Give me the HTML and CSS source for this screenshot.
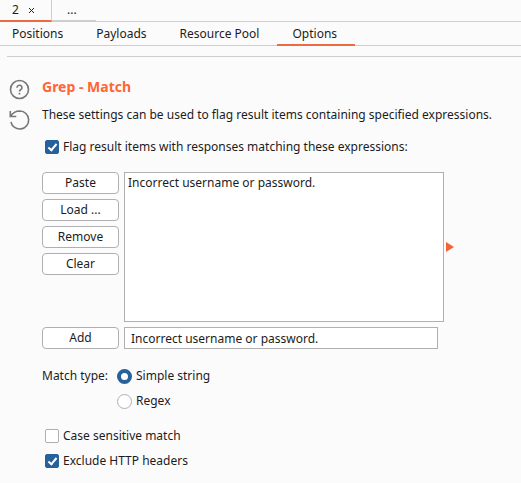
FILE: index.html
```html
<!DOCTYPE html>
<html lang="en">
<head>
<meta charset="utf-8">
<title>Intruder options</title>
<link rel="stylesheet" href="styles.css">
</head>
<body>
<nav class="attack-tabs" aria-label="Attacks">
  <div class="attack-tab attack-tab-active"><a href="#attack">2</a><button class="close" type="button" aria-label="Close tab"><svg width="7" height="7" viewBox="0 0 7 7"><path d="M1 1l5 5M6 1l-5 5"/></svg></button></div>
  <a class="attack-tab attack-tab-new" href="#new">...</a>
</nav>
<nav class="section-tabs" aria-label="Sections">
  <a href="#positions">Positions</a>
  <a href="#payloads">Payloads</a>
  <a href="#pool">Resource Pool</a>
  <a class="current" href="#options">Options</a>
</nav>
<main class="panel">
  <div class="tools">
    <button type="button" aria-label="Help"><svg width="22" height="22" viewBox="0 0 22 22"><circle cx="11.500" cy="10.500" r="9"/><path d="M9 8.700a2.500 2.300 0 1 1 3.900 1.800c-.9.6-1.400 1-1.400 1.900"/><path d="M11.500 13.800v1.700"/></svg></button>
    <button type="button" aria-label="Restore defaults"><svg width="22" height="22" viewBox="0 0 22 22"><path d="M2.300 2v5.500h6M2.600 7.300C4.500 4 7.700 2 11.900 2a9 9 0 1 1-9 11"/></svg></button>
  </div>
  <form class="content">
    <h1>Grep - Match</h1>
    <p>These settings can be used to flag result items containing specified expressions.</p>
    <label class="check"><input type="checkbox" checked>Flag result items with responses matching these expressions:</label>
    <div class="editor">
      <div class="buttons">
        <button type="button">Paste</button>
        <button type="button">Load ...</button>
        <button type="button">Remove</button>
        <button type="button">Clear</button>
      </div>
      <ul class="list" aria-label="Expressions"><li>Incorrect username or password.</li></ul>
      <svg class="arrow" width="8" height="10" viewBox="0 0 8 10"><path d="M0 0l8 5-8 5z"/></svg>
      <button type="button">Add</button>
      <input class="entry" type="text" aria-label="New expression" value="Incorrect username or password.">
    </div>
    <div class="match" role="radiogroup" aria-labelledby="match-type">
      <span id="match-type">Match type:</span>
      <div class="choices">
        <label><input type="radio" name="match" checked>Simple string</label>
        <label><input type="radio" name="match">Regex</label>
      </div>
    </div>
    <div class="checks">
      <label class="check"><input type="checkbox">Case sensitive match</label>
      <label class="check"><input type="checkbox" checked>Exclude HTTP headers</label>
    </div>
  </form>
</main>
</body>
</html>
```

FILE: styles.css
```css
*,
*::before {
  box-sizing: border-box;
}

body {
  margin: 0;
  background: #fbfbfc;
  color: #1c1c1c;
  font: 12px/20px "Noto Sans", sans-serif;
}

a {
  color: inherit;
  text-decoration: none;
}

button,
input {
  font: inherit;
  color: inherit;
}

.attack-tabs {
  display: flex;
  height: 22px;
  border-bottom: 1px solid #cecece;
}

.attack-tab {
  height: 22px;
}

.attack-tab-active {
  display: flex;
  align-items: center;
  gap: 9px;
  width: 52px;
  padding-left: 12px;
  border-right: 1px solid #cecece;
  border-bottom: 2px solid #ec6b43;
}

.close {
  display: flex;
  padding: 0;
  border: 0;
  background: none;
}

.close svg {
  fill: none;
  stroke: #222;
}

.attack-tab-new {
  width: 44px;
  padding-left: 15px;
  border-bottom: 2px solid #cecece;
}

.section-tabs {
  display: flex;
  height: 24px;
  border-bottom: 1px solid #cecece;
}

.section-tabs a {
  height: 24px;
  padding: 2px 18px 0 15px;
}

.section-tabs a:first-child {
  padding-left: 12px;
}

.section-tabs .current {
  border-bottom: 2px solid #ec6b43;
}

.panel {
  display: flex;
  gap: 11px;
  margin: 10px 0 0 7px;
  padding-top: 20px;
  border-top: 1px solid #cecece;
}

.tools {
  display: flex;
  flex-direction: column;
  gap: 8px;
  width: 24px;
  padding-top: 2px;
}

.tools button {
  display: flex;
  padding: 0 1px;
  border: 0;
  background: none;
}

.tools svg {
  fill: none;
  stroke: #777;
  stroke-width: 1.6;
}

.content {
  flex: 1;
}

h1 {
  margin: 0 0 8px;
  color: #ff6633;
  font-size: 14px;
  line-height: 20px;
}

p {
  margin: 0 0 12px;
}

label {
  display: flex;
  align-items: center;
  height: 20px;
}

.check {
  gap: 4px;
  padding-left: 3px;
}

.check input,
.choices input {
  display: grid;
  place-items: center;
  appearance: none;
  flex: none;
  margin: 0;
  border: 1px solid #b0b0b0;
  background: #fff;
}

.check input {
  width: 14px;
  height: 14px;
  border-radius: 2px;
}

.check input:checked {
  border-color: #26619c;
  background: #26619c;
}

.check input:checked::before {
  content: "";
  width: 5px;
  height: 9px;
  margin-bottom: 2px;
  border: solid #fff;
  border-width: 0 2px 2px 0;
  transform: rotate(40deg);
}

.editor {
  display: grid;
  grid-template-columns: 77px 1fr 8px;
  gap: 5px 0;
  align-items: center;
  margin: 15px 67px 17px 0;
}

.editor button {
  width: 77px;
  height: 22px;
  padding: 0;
  border: 1px solid #b0b0b2;
  border-radius: 4px;
  background: #fff;
}

.buttons {
  display: flex;
  flex-direction: column;
  align-self: start;
  gap: 5px;
}

.list {
  height: 150px;
  margin: 0 2px 0 5px;
  padding: 0 3px;
  border: 1px solid #b0b0b2;
  background: #fff;
  list-style: none;
}

.arrow {
  fill: #f2643a;
}

.entry {
  width: auto;
  min-width: 0;
  height: 22px;
  margin: 0 8px 0 5px;
  padding: 0 6px;
  border: 1px solid #b0b0b2;
  border-radius: 0;
  background: #fff;
}

.match {
  display: flex;
  gap: 6px;
}

#match-type {
  width: 69px;
  white-space: nowrap;
}

.choices,
.checks {
  display: flex;
  flex-direction: column;
  gap: 5px;
}

.choices label {
  gap: 4px;
}

.choices input {
  width: 15px;
  height: 15px;
  border-radius: 50%;
}

.choices input:checked {
  border: 4px solid #26619c;
}

.checks {
  margin-top: 15px;
}
```
